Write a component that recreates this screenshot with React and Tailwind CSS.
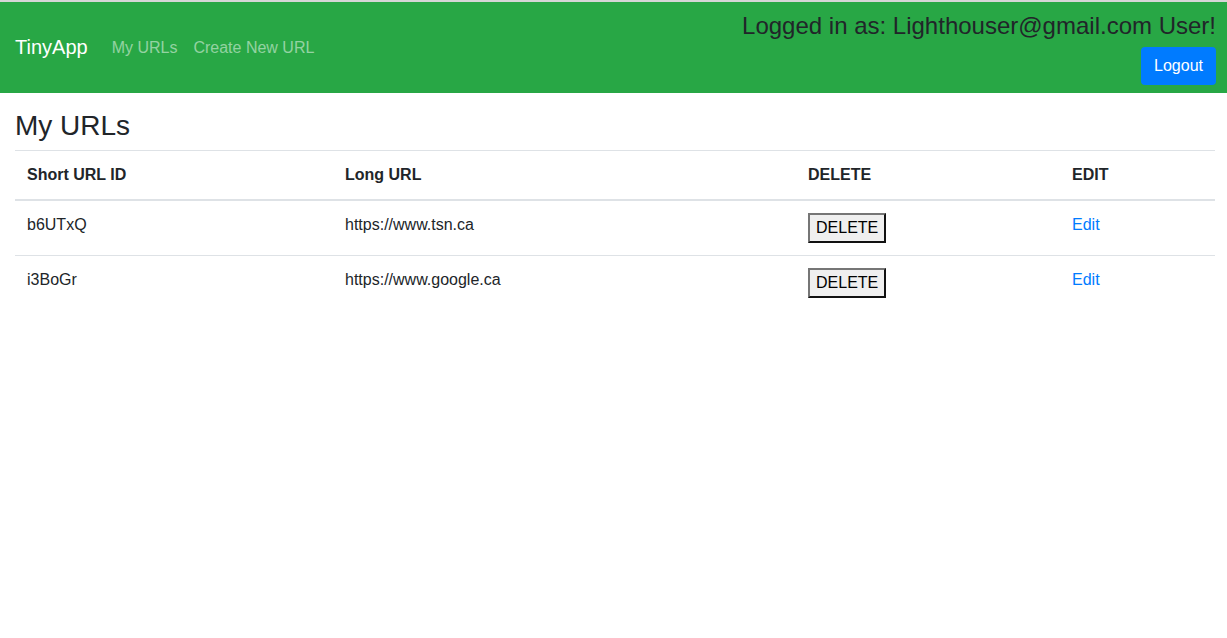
const urls = [
  { id: "b6UTxQ", long: "https://www.tsn.ca" },
  { id: "i3BoGr", long: "https://www.google.ca" },
];

export default function App() {
  return (
    <div className="min-h-screen bg-white text-[#212529] text-base leading-6" style={{ fontFamily: '"Liberation Sans", Arial, sans-serif' }}>
      <div className="h-[2px] bg-[#d6d6d6]" />
      <nav className="flex items-center justify-between bg-[#28a745] pl-[15px] pr-[11px] h-[91px]">
        <div className="flex items-center">
          <a className="text-xl leading-[30px] text-white mr-6 mt-[-1px]">TinyApp</a>
          <a className="text-white/50 pr-2">My URLs</a>
          <a className="text-white/50 px-2">Create New URL</a>
        </div>
        <div className="flex flex-col items-end self-start pt-[8px]">
          <h4 className="text-2xl leading-[30px] mt-[1px]">Logged in as: Lighthouser@gmail.com User!</h4>
          <button className="mt-[6px] h-[38px] px-[13px] rounded bg-[#007bff] text-white">Logout</button>
        </div>
      </nav>
      <div className="pl-[15px] pr-[12px]">
        <h3 className="text-[28px] leading-[34px] mt-[16px] mb-[7px] font-normal">My URLs</h3>
        <table className="w-full border-collapse text-left">
          <thead>
            <tr className="border-t border-[#dee2e6] border-b-2">
              <th className="w-[318px] p-3 font-bold">Short URL ID</th>
              <th className="w-[463px] p-3 font-bold">Long URL</th>
              <th className="w-[264px] p-3 font-bold">DELETE</th>
              <th className="p-3 font-bold">EDIT</th>
            </tr>
          </thead>
          <tbody>
            {urls.map((u, i) => (
              <tr key={u.id} className={i === 0 ? "border-b border-[#dee2e6]" : ""}>
                <td className="p-3 align-top">{u.id}</td>
                <td className="p-3 align-top">{u.long}</td>
                <td className="p-3 align-top">
                  <button className="bg-[#efefef] text-black px-[6px] leading-[26px] border-2 border-[#767676] border-r-[#111] border-b-[#111]">DELETE</button>
                </td>
                <td className="p-3 align-top">
                  <a className="text-[#007bff]">Edit</a>
                </td>
              </tr>
            ))}
          </tbody>
        </table>
      </div>
    </div>
  );
}
